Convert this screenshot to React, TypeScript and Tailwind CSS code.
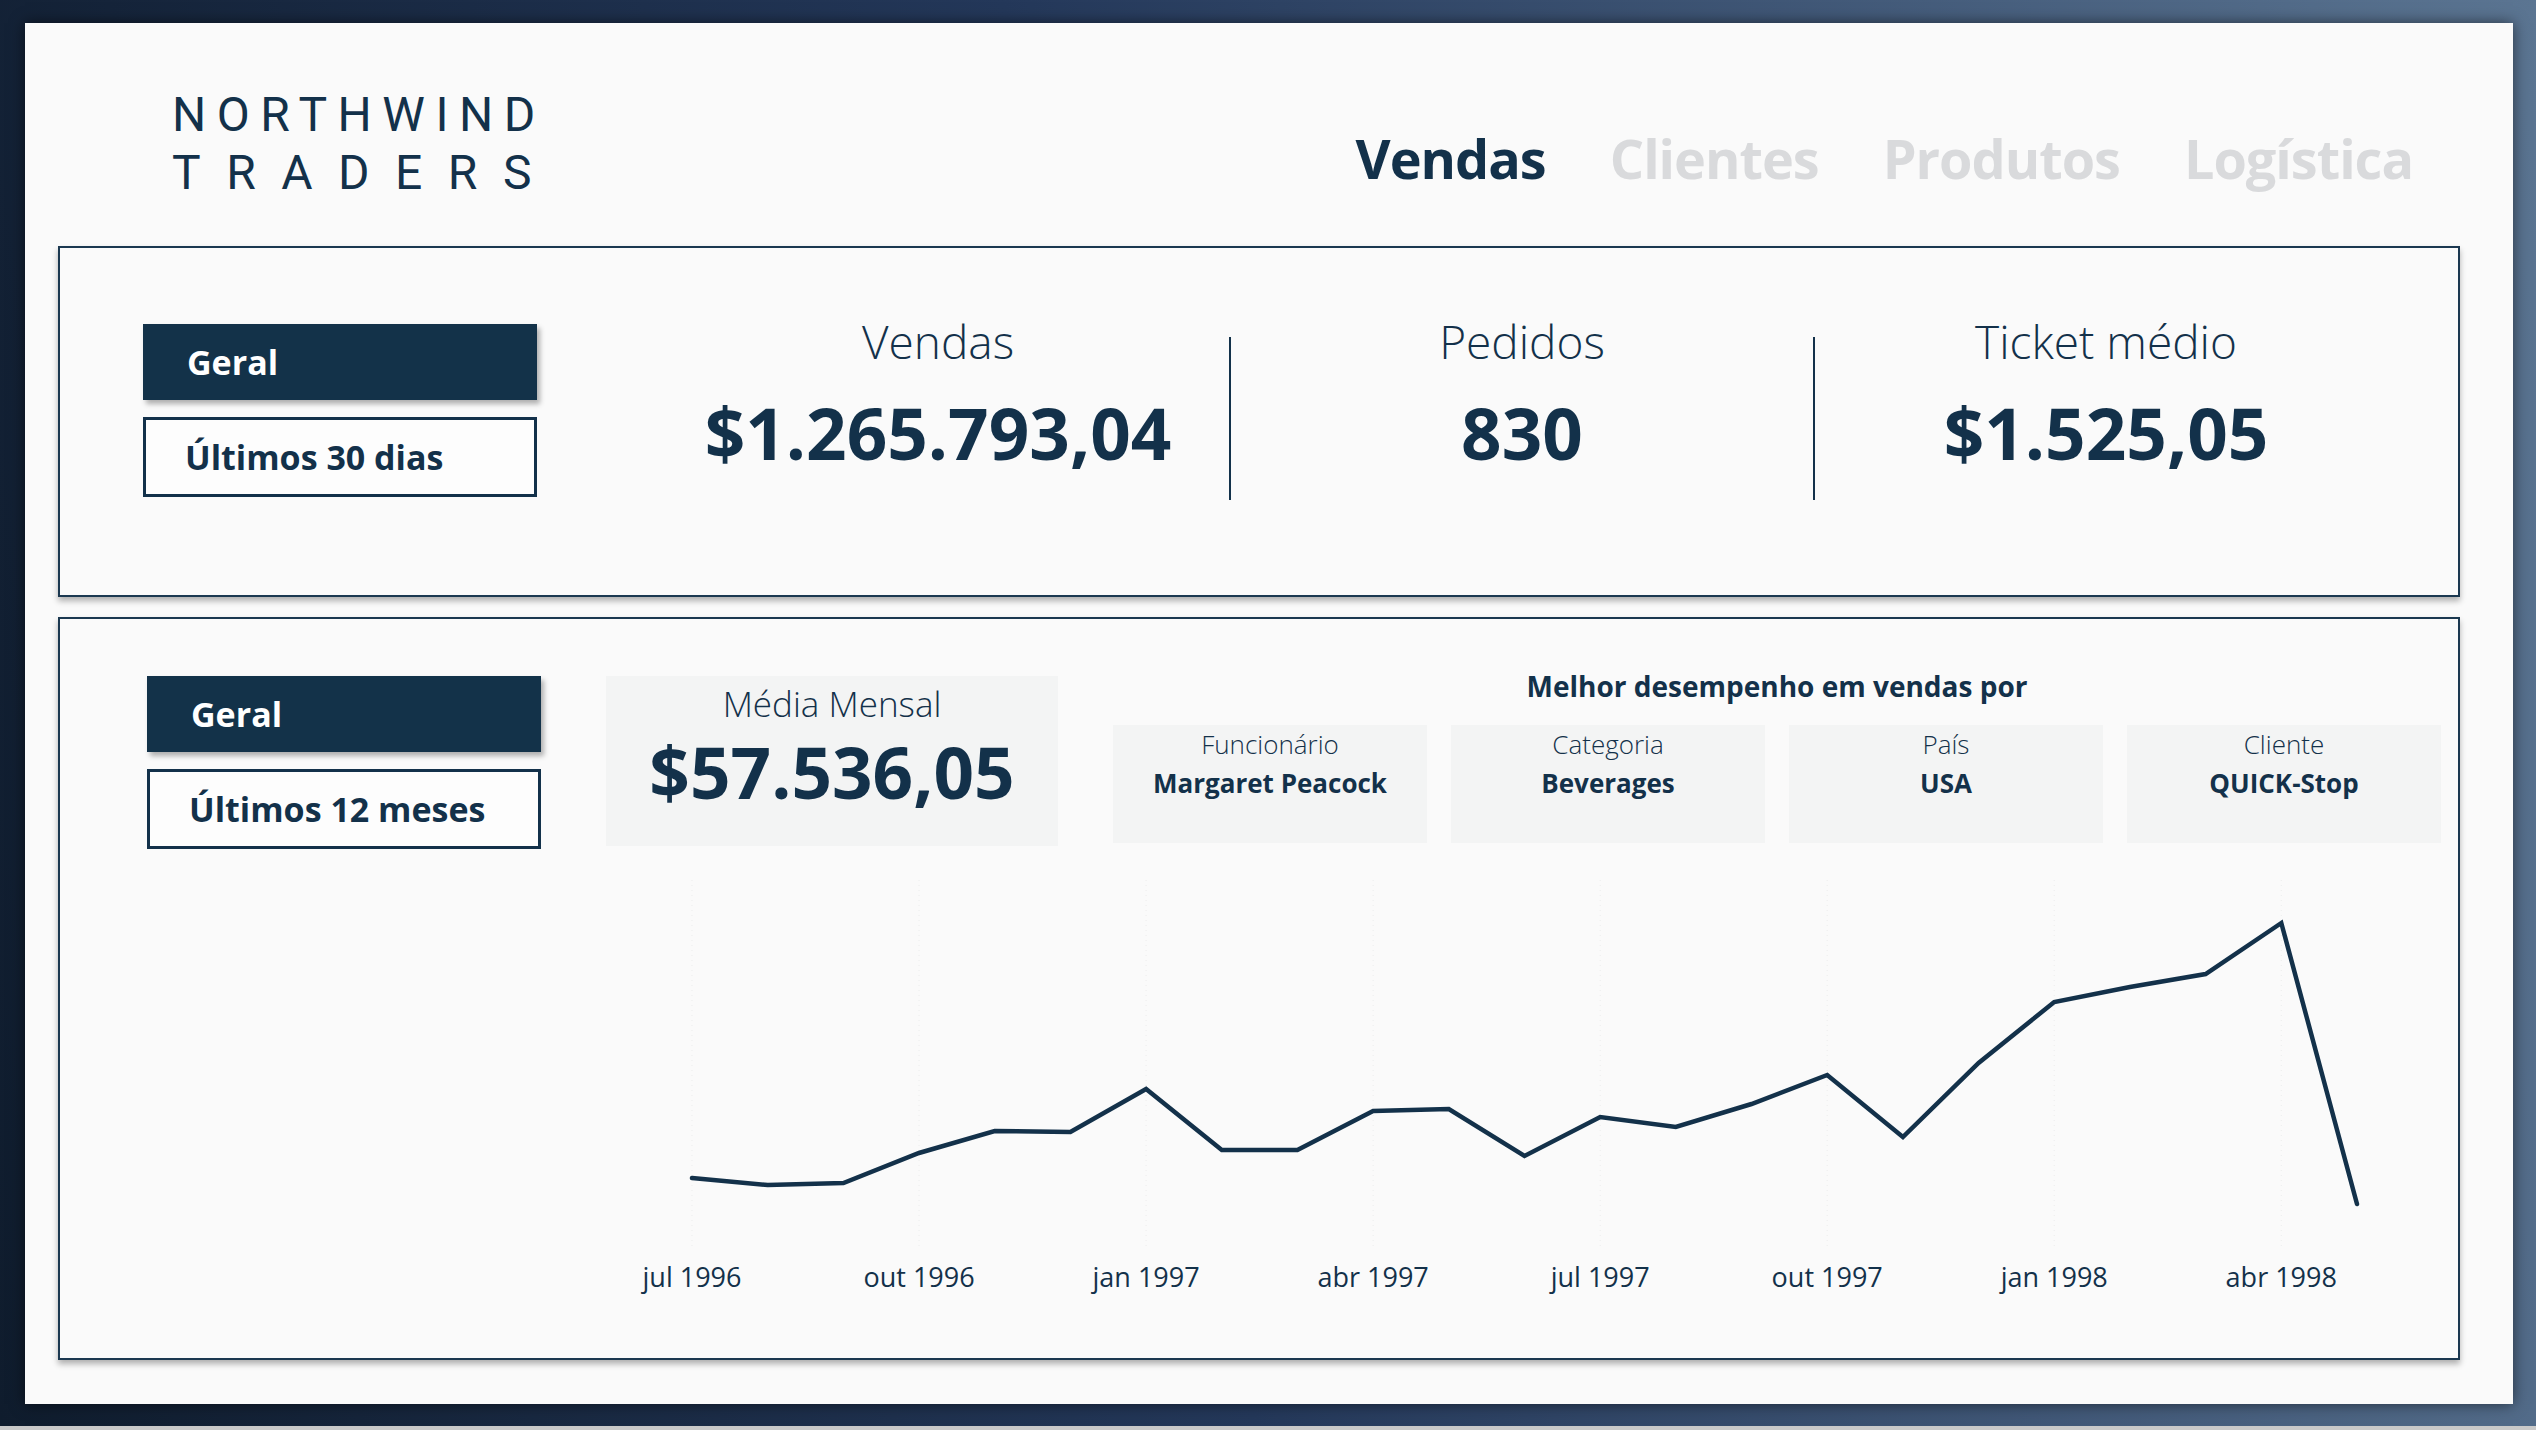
import React from "react";

const sales = [
  1178, 1185, 1183, 1153, 1131, 1132, 1089, 1150, 1150, 1111, 1109, 1156, 1117, 1127, 1104, 1075, 1137, 1063,
  1002, 987, 974, 923, 1204,
];
const months = ["jul 1996", "out 1996", "jan 1997", "abr 1997", "jul 1997", "out 1997", "jan 1998", "abr 1998"];

const xAt = (i: number) => 692 + i * 75.68 - 60;

function SalesChart() {
  const d = sales.map((y, i) => `${i === 0 ? "M" : "L"}${xAt(i).toFixed(1)} ${y - 860}`).join(" ");
  return (
    <svg width="2399" height="498" viewBox="0 0 2399 498" className="block">
      {months.map((m, k) => (
        <line
          key={m}
          x1={xAt(k * 3)}
          x2={xAt(k * 3)}
          y1={20}
          y2={390}
          stroke="#eceded"
          strokeWidth="1"
          strokeDasharray="1 4"
        />
      ))}
      <path d={d} fill="none" stroke="#13314a" strokeWidth="4.5" strokeLinejoin="miter" strokeLinecap="round" />
      {months.map((m, k) => (
        <text
          key={m + "t"}
          x={xAt(k * 3)}
          y={427}
          textAnchor="middle"
          fontFamily="'Open Sans', sans-serif"
          fontSize="27"
          fill="#13314a"
        >
          {m}
        </text>
      ))}
    </svg>
  );
}

function Kpi({ label, value }: { label: string; value: string }) {
  return (
    <div className="w-[582px] flex flex-col items-center">
      <div className="mt-[66px] text-[46px] leading-[54px] font-light text-[#13314a]">{label}</div>
      <div className="mt-[24px] text-[71px] leading-[82px] font-bold text-[#13314a]">{value}</div>
    </div>
  );
}

function FilterButtons({ period }: { period: string }) {
  return (
    <div className="flex flex-col gap-[17px]">
      <div className="w-[394px] h-[76px] bg-[#133249] flex items-center pl-[44px] text-white text-[34px] font-bold shadow-[3px_4px_5px_rgba(0,0,0,0.3)]">
        Geral
      </div>
      <div className="w-[394px] h-[80px] border-[3px] border-[#13314a] bg-[#fdfdfd] flex items-center pl-[39px] text-[#13314a] text-[34px] font-bold">
        {period}
      </div>
    </div>
  );
}

function TopCard({ label, value }: { label: string; value: string }) {
  return (
    <div className="w-[314px] h-[118px] bg-[#f3f4f4] flex flex-col items-center pt-[2px]">
      <div className="text-[26px] leading-[34px] font-light text-[#13314a]">{label}</div>
      <div className="mt-[5px] text-[26px] leading-[34px] font-bold text-[#13314a]">{value}</div>
    </div>
  );
}

export default function App() {
  return (
    <div className="w-[2536px] h-[1430px] overflow-hidden flex flex-col font-['Open_Sans',sans-serif]">
      <div className="h-[1426px] bg-[linear-gradient(80deg,#0f1c2d_0%,#24385a_45%,#5b7592_100%)] pl-[25px] pt-[23px]">
        <div className="w-[2488px] h-[1381px] bg-[#fafafa] shadow-[0_0_14px_rgba(0,0,0,0.55)] pl-[33px] pr-[53px] flex flex-col">
          {/* header */}
          <div className="h-[223px] flex items-start pt-[63px]">
            <div className="ml-[114px] font-['Roboto',sans-serif] text-[48px] leading-[58px] text-[#13314a]">
              <div className="tracking-[10.5px]">NORTHWIND</div>
              <div className="tracking-[25.5px]">TRADERS</div>
            </div>
            <nav className="ml-auto mr-[47px] mt-[45px] flex gap-[64px] text-[54px] leading-[54px] font-bold tracking-[-1px]">
              <span className="text-[#13314a]">Vendas</span>
              <span className="text-[#d9dadc]">Clientes</span>
              <span className="text-[#d9dadc]">Produtos</span>
              <span className="text-[#d9dadc]">Logística</span>
            </nav>
          </div>

          {/* KPI card */}
          <div className="h-[351px] border-2 border-[#1b3850] shadow-[0_4px_6px_rgba(0,0,0,0.3)] flex items-start">
            <div className="ml-[83px] mt-[76px]">
              <FilterButtons period="Últimos 30 dias" />
            </div>
            <div className="ml-[110px] flex items-start">
              <Kpi label="Vendas" value="$1.265.793,04" />
              <div className="w-[2px] h-[163px] mt-[89px] bg-[#13314a]" />
              <Kpi label="Pedidos" value="830" />
              <div className="w-[2px] h-[163px] mt-[89px] bg-[#13314a]" />
              <Kpi label="Ticket médio" value="$1.525,05" />
            </div>
          </div>

          {/* monthly card */}
          <div className="mt-[20px] h-[743px] border-2 border-[#1b3850] shadow-[0_4px_6px_rgba(0,0,0,0.3)] flex flex-col">
            <div className="h-[241px] flex items-start">
              <div className="ml-[87px] mt-[57px]">
                <FilterButtons period="Últimos 12 meses" />
              </div>
              <div className="ml-[65px] mt-[57px] w-[452px] h-[170px] bg-[#f3f4f4] flex flex-col items-center pt-[7px]">
                <div className="text-[35px] leading-[42px] font-light text-[#13314a]">Média Mensal</div>
                <div className="mt-[6px] text-[71px] leading-[82px] font-bold text-[#13314a]">$57.536,05</div>
              </div>
              <div className="ml-[55px] mt-[49px] flex flex-col items-center">
                <div className="text-[28px] leading-[37px] font-bold text-[#13314a]">Melhor desempenho em vendas por</div>
                <div className="mt-[20px] flex gap-[24px]">
                  <TopCard label="Funcionário" value="Margaret Peacock" />
                  <TopCard label="Categoria" value="Beverages" />
                  <TopCard label="País" value="USA" />
                  <TopCard label="Cliente" value="QUICK-Stop" />
                </div>
              </div>
            </div>
            <SalesChart />
          </div>
        </div>
      </div>
      <div className="h-[4px] bg-[#c9c9c9]" />
    </div>
  );
}
